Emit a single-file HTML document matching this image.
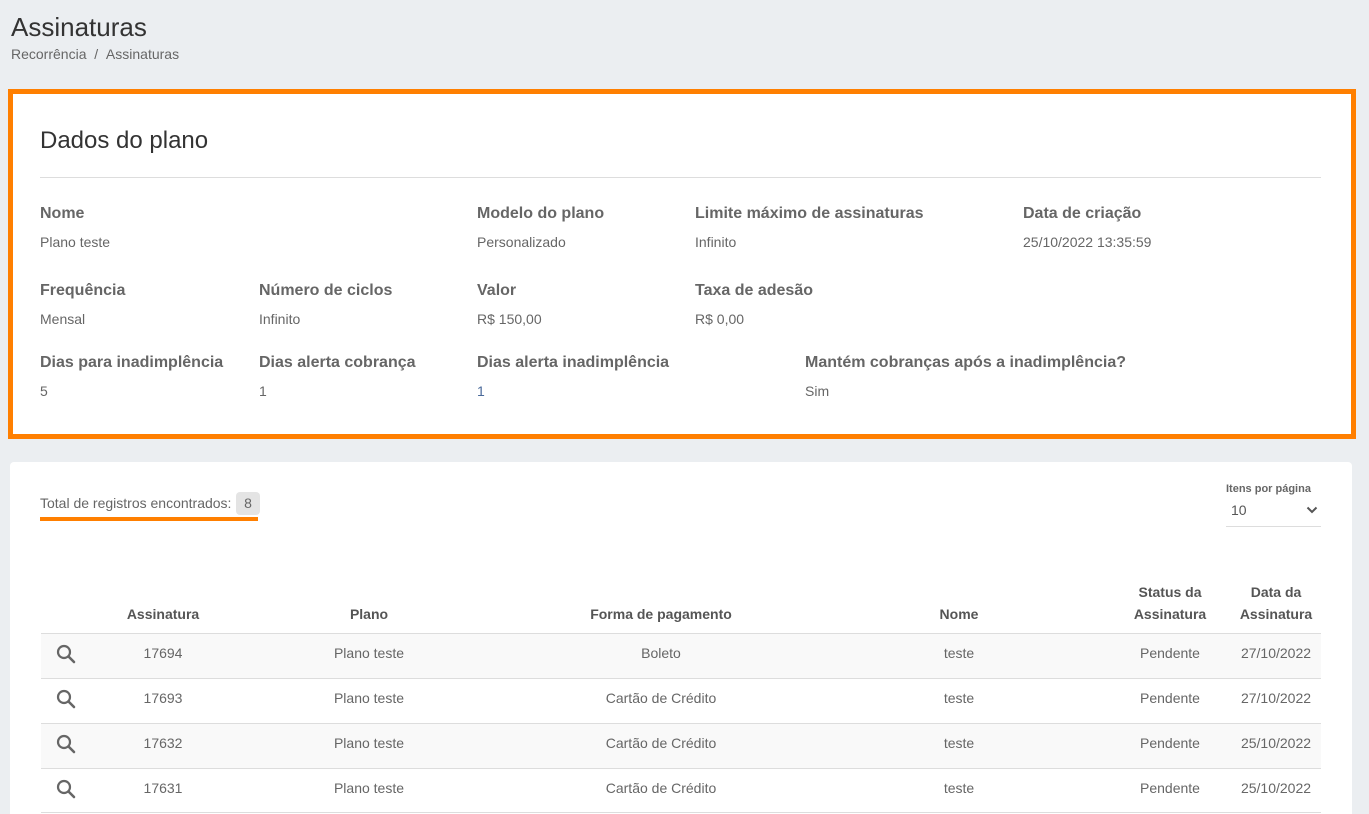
<!DOCTYPE html>
<html><head><meta charset="utf-8"><style>
*{margin:0;padding:0;box-sizing:border-box}
html{width:1369px;height:814px;overflow:hidden}
body{width:1369px;height:814px;overflow:hidden;background:#ebeef1;font-family:"Liberation Sans",sans-serif;color:#666;position:relative}
.a{position:absolute;white-space:nowrap}
h1{position:absolute;left:11px;top:12px;font-size:26px;font-weight:normal;color:#333}
.bc{left:11px;top:46px;font-size:14px;color:#666}
.box{position:absolute;left:8px;top:89px;width:1348px;height:350px;border:5px solid #ff7f00;background:#fff}
.lbl{font-size:16px;font-weight:bold;color:#666}
.val{font-size:14px;color:#666}
.card{position:absolute;left:10px;top:462px;width:1342px;height:352px;background:#fff;border-radius:4px 4px 0 0}
.th{font-size:14px;font-weight:bold;color:#555;text-align:center;line-height:22px}
.row{position:absolute;left:41px;width:1280px;height:45px;border-top:1px solid #ddd}
.td{position:absolute;top:11px;font-size:14px;color:#666;transform:translateX(-50%);white-space:nowrap}
</style></head><body>
<h1>Assinaturas</h1>
<div class="a bc">Recorrência&nbsp;&nbsp;/&nbsp;&nbsp;Assinaturas</div>
<div class="box"></div>
<div class="a" style="left:40px;top:127px;font-size:24px;color:#333">Dados do plano</div>
<div class="a" style="left:40px;top:177px;width:1281px;height:1px;background:#ddd"></div>
<div class="a lbl" style="left:40px;top:205px">Nome</div><div class="a val" style="left:40px;top:234px">Plano teste</div>
<div class="a lbl" style="left:477px;top:205px">Modelo do plano</div><div class="a val" style="left:477px;top:234px">Personalizado</div>
<div class="a lbl" style="left:695px;top:205px">Limite máximo de assinaturas</div><div class="a val" style="left:695px;top:234px">Infinito</div>
<div class="a lbl" style="left:1023px;top:205px">Data de criação</div><div class="a val" style="left:1023px;top:234px">25/10/2022 13:35:59</div>
<div class="a lbl" style="left:40px;top:282px">Frequência</div><div class="a val" style="left:40px;top:311px">Mensal</div>
<div class="a lbl" style="left:259px;top:282px">Número de ciclos</div><div class="a val" style="left:259px;top:311px">Infinito</div>
<div class="a lbl" style="left:477px;top:282px">Valor</div><div class="a val" style="left:477px;top:311px">R$ 150,00</div>
<div class="a lbl" style="left:695px;top:282px">Taxa de adesão</div><div class="a val" style="left:695px;top:311px">R$ 0,00</div>
<div class="a lbl" style="left:40px;top:354px">Dias para inadimplência</div><div class="a val" style="left:40px;top:383px">5</div>
<div class="a lbl" style="left:259px;top:354px">Dias alerta cobrança</div><div class="a val" style="left:259px;top:383px">1</div>
<div class="a lbl" style="left:477px;top:354px">Dias alerta inadimplência</div><div class="a val" style="left:477px;top:383px;color:#4a6a9a">1</div>
<div class="a lbl" style="left:805px;top:354px">Mantém cobranças após a inadimplência?</div><div class="a val" style="left:805px;top:383px">Sim</div>

<div class="card"></div>
<div class="a" style="left:40px;top:495px;font-size:14px;color:#666">Total de registros encontrados:</div>
<div class="a" style="left:236px;top:492px;width:24px;height:23px;background:#e4e4e4;border-radius:4px;font-size:14px;text-align:center;line-height:23px">8</div>
<div class="a" style="left:40px;top:517px;width:218px;height:4px;background:#ff7f00"></div>
<div class="a" style="left:1226px;top:483px;font-size:11px;font-weight:bold;color:#666">Itens por página</div>
<div class="a" style="left:1231px;top:502px;font-size:14px;color:#555">10</div>
<svg class="a" style="left:1306px;top:506px" width="12" height="8" viewBox="0 0 12 8"><path d="M1.5 1.5L6 6L10.5 1.5" stroke="#555" stroke-width="2" fill="none"/></svg>
<div class="a" style="left:1226px;top:526px;width:95px;height:1px;background:#ddd"></div>

<div class="a th" style="left:163px;top:603px;transform:translateX(-50%)">Assinatura</div>
<div class="a th" style="left:369px;top:603px;transform:translateX(-50%)">Plano</div>
<div class="a th" style="left:661px;top:603px;transform:translateX(-50%)">Forma de pagamento</div>
<div class="a th" style="left:959px;top:603px;transform:translateX(-50%)">Nome</div>
<div class="a th" style="left:1170px;top:581px;transform:translateX(-50%)">Status da<br>Assinatura</div>
<div class="a th" style="left:1276px;top:581px;transform:translateX(-50%)">Data da<br>Assinatura</div>

<div class="row" style="top:633px;background:#f9f9f9">
<svg class="a" style="left:15px;top:10px" width="20" height="20" viewBox="0 0 20 20"><circle cx="8" cy="8" r="6" stroke="#666" stroke-width="2.2" fill="none"/><path d="M12.5 12.5L18 18" stroke="#666" stroke-width="2.6" stroke-linecap="round"/></svg>
<div class="td" style="left:122px">17694</div><div class="td" style="left:328px">Plano teste</div><div class="td" style="left:620px">Boleto</div><div class="td" style="left:918px">teste</div><div class="td" style="left:1129px">Pendente</div><div class="td" style="left:1235px">27/10/2022</div></div>
<div class="row" style="top:678px">
<svg class="a" style="left:15px;top:10px" width="20" height="20" viewBox="0 0 20 20"><circle cx="8" cy="8" r="6" stroke="#666" stroke-width="2.2" fill="none"/><path d="M12.5 12.5L18 18" stroke="#666" stroke-width="2.6" stroke-linecap="round"/></svg>
<div class="td" style="left:122px">17693</div><div class="td" style="left:328px">Plano teste</div><div class="td" style="left:620px">Cartão de Crédito</div><div class="td" style="left:918px">teste</div><div class="td" style="left:1129px">Pendente</div><div class="td" style="left:1235px">27/10/2022</div></div>
<div class="row" style="top:723px;background:#f9f9f9">
<svg class="a" style="left:15px;top:10px" width="20" height="20" viewBox="0 0 20 20"><circle cx="8" cy="8" r="6" stroke="#666" stroke-width="2.2" fill="none"/><path d="M12.5 12.5L18 18" stroke="#666" stroke-width="2.6" stroke-linecap="round"/></svg>
<div class="td" style="left:122px">17632</div><div class="td" style="left:328px">Plano teste</div><div class="td" style="left:620px">Cartão de Crédito</div><div class="td" style="left:918px">teste</div><div class="td" style="left:1129px">Pendente</div><div class="td" style="left:1235px">25/10/2022</div></div>
<div class="row" style="top:768px;border-bottom:1px solid #ddd">
<svg class="a" style="left:15px;top:10px" width="20" height="20" viewBox="0 0 20 20"><circle cx="8" cy="8" r="6" stroke="#666" stroke-width="2.2" fill="none"/><path d="M12.5 12.5L18 18" stroke="#666" stroke-width="2.6" stroke-linecap="round"/></svg>
<div class="td" style="left:122px">17631</div><div class="td" style="left:328px">Plano teste</div><div class="td" style="left:620px">Cartão de Crédito</div><div class="td" style="left:918px">teste</div><div class="td" style="left:1129px">Pendente</div><div class="td" style="left:1235px">25/10/2022</div></div>
</body></html>
